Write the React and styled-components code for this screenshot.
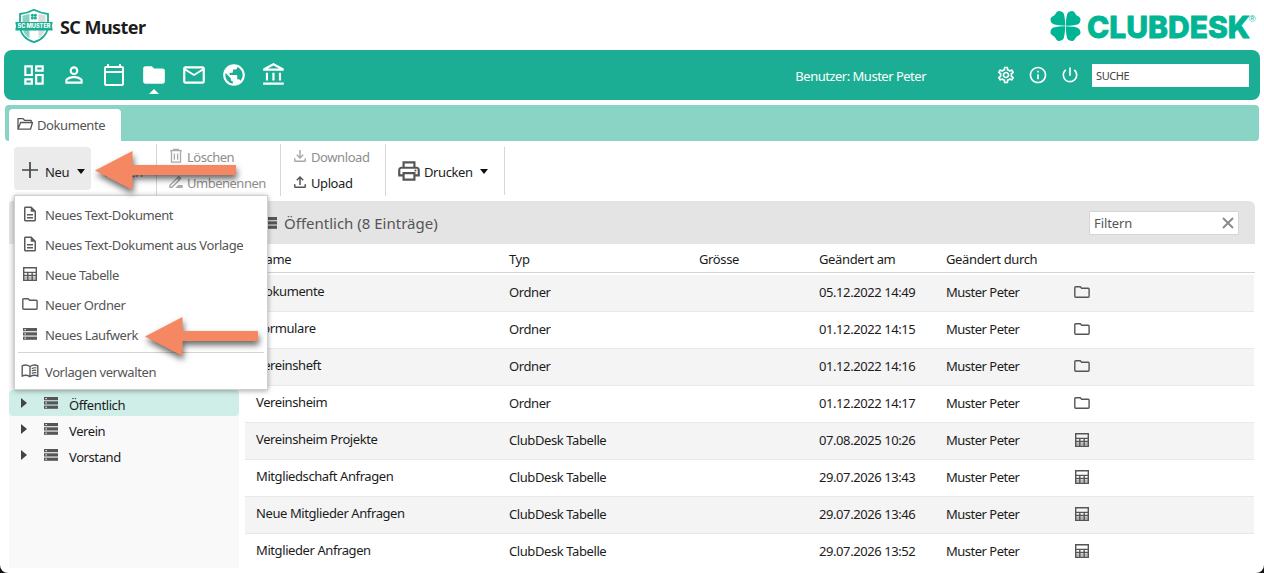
import React from "react";
import styled, { createGlobalStyle, css } from "styled-components";
import {
  MdOutlineDashboard, MdPersonOutline, MdOutlineCalendarToday, MdFolder, MdMailOutline, MdPublic,
  MdOutlineAccountBalance, MdOutlineSettings, MdInfoOutline, MdPowerSettingsNew, MdOutlineDescription,
  MdOutlinePrint, MdOutlineFileDownload, MdOutlineFileUpload, MdDriveFileRenameOutline,
} from "react-icons/md";

const Global = createGlobalStyle`
  *, *::before, *::after { box-sizing: border-box; }
  body { margin: 0; background: #15131a; overflow: hidden; }
`;

const Window = styled.div`
  position: relative;
  height: 573px;
  width: 1264px;
  overflow: hidden;
  display: flex;
  flex-direction: column;
  background: #fff;
  border-radius: 0 0 8px 8px;
  font-family: "Noto Sans", "Open Sans", sans-serif;
  font-size: 13px;
  letter-spacing: -0.41px;
  color: #1c1c1c;
  white-space: nowrap;
`;

const Header = styled.header`
  height: 50px;
  flex: none;
  display: flex;
  align-items: flex-start;
  padding: 8px 7px 0 15px;
`;
const ClubName = styled.h1`
  margin: 7px 0 0 7px;
  font: 700 18px/25px "Noto Sans", sans-serif;
  letter-spacing: -0.55px;
  flex: 1;
`;
const Brand = styled.div`
  display: flex;
  color: #00b594;
  padding-top: 2px;
`;
const BrandName = styled.span`
  width: 168px;
  font: 800 30px/34px Inter, sans-serif;
  letter-spacing: 0;
  -webkit-text-stroke: 0.8px currentColor;
  padding-left: 6px;
`;
const Registered = styled.span`
  width: 8px;
  font: 9px/10px "Liberation Sans", sans-serif;
  margin-top: 4px;
`;

const Nav = styled.nav`
  height: 50px;
  flex: none;
  margin: 0 4px;
  padding: 0 11px 0 17px;
  border-radius: 8px;
  background: #1bae94;
  color: #fff;
  display: flex;
  align-items: center;
`;
const NavItem = styled.span`
  position: relative;
  width: 40px;
  height: 26px;
  display: flex;
  align-items: center;
  svg { width: 26px; height: 26px; }
  ${(p) => p.$small && css`
    padding-left: 1px;
    svg { width: 24px; height: 24px; }
  `}
  ${(p) => p.$active && css`
    &::after {
      content: "";
      position: absolute;
      left: 8px;
      top: 27px;
      border: 5px solid transparent;
      border-top: 0;
      border-bottom-color: #fff;
    }
  `}
`;
const User = styled.span`
  margin: 0 70px 0 auto;
  padding-top: 2px;
  letter-spacing: -0.5px;
`;
const NavTool = styled.span`
  width: 32px;
  height: 20px;
  svg { width: 20px; height: 20px; }
`;
const Search = styled.div`
  width: 157px;
  height: 23px;
  padding: 0 4px;
  background: #fff;
  color: #444;
  font-size: 11px;
  line-height: 24px;
`;

const TabStrip = styled.div`
  height: 36px;
  flex: none;
  margin: 5px 5px 0;
  padding: 4px 4px 0;
  border-radius: 4px;
  background: #89d4c4;
`;
const Tab = styled.div`
  width: 112px;
  height: 32px;
  padding: 0 7px;
  display: flex;
  align-items: center;
  gap: 3px;
  border-radius: 4px 4px 0 0;
  background: #fff;
  color: #555;
  svg { margin-top: -3px; }
`;

const Toolbar = styled.div`
  height: 60px;
  flex: none;
  padding-left: 14px;
  display: flex;
  align-items: flex-start;
`;
const Group = styled.div`
  width: ${(p) => p.$w}px;
  height: ${(p) => p.$h || 52}px;
  margin-top: ${(p) => (p.$h ? 6 : 3)}px;
  padding-left: ${(p) => p.$pad}px;
  border-right: 1px solid #d6d6d6;
  display: flex;
  flex-direction: ${(p) => (p.$row ? "row" : "column")};
  align-items: ${(p) => (p.$row ? "center" : "stretch")};
`;
const NewButton = styled.div`
  width: 77px;
  height: 43px;
  margin: 0 12px 3px 0;
  padding: 6px 6px 0 8px;
  display: flex;
  align-items: center;
  border-radius: 4px;
  background: #ebebeb;
`;
const Label = styled.span`
  margin: 0 auto 0 ${(p) => p.$left || 0}px;
  padding-top: ${(p) => p.$top || 0}px;
`;
const Caret = styled.i`
  border: 4.5px solid transparent;
  border-top: 5px solid #111;
  border-bottom: 0;
`;
const Action = styled.div`
  height: 26px;
  display: flex;
  align-items: center;
  gap: 2px;
  color: ${(p) => (p.$off ? "#8d8d8d" : "#1c1c1c")};
  svg { color: ${(p) => (p.$off ? "#aaa" : "#555")}; margin: -2px 0 0 -1px; }
`;
const OpenAction = styled(Action)`
  width: 40px;
  height: 32px;
  padding-top: 4px;
  justify-content: flex-end;
`;
const EditAction = styled(Action)`
  letter-spacing: -0.5px;
  svg { width: 18px; margin-right: 0; }
`;

const Body = styled.div`
  height: 367px;
  flex: none;
  overflow: hidden;
  padding-left: 9px;
  display: flex;
  gap: 6px;
`;
const Sidebar = styled.aside`
  width: 230px;
  background: #f9f9f9;
  border-radius: 4px 4px 0 0;
`;
const SideHead = styled.div`
  height: 43px;
  margin-bottom: 146px;
  border-radius: 4px 4px 0 0;
  background: #e4e4e4;
`;
const Node = styled.div`
  height: 26px;
  padding: 0 12px;
  display: flex;
  align-items: flex-start;
  border-radius: 4px;
  background: ${(p) => (p.$on ? "#cfeee8" : "transparent")};
  svg { margin: 7px 11px 0 17px; color: #555; }
  span { line-height: 30px; }
`;
const Expander = styled.i`
  margin-top: 8px;
  border: 5px solid transparent;
  border-left: 6px solid #444;
  border-right: 0;
`;

const Main = styled.main`
  width: 1010px;
`;
const MainHead = styled.div`
  height: 43px;
  padding: 0 16px 0 18px;
  border-radius: 4px 6px 0 0;
  background: #e4e4e4;
  display: flex;
  align-items: center;
  color: #555;
`;
const Title = styled.span`
  font-size: 15px;
  letter-spacing: 0;
  line-height: 20px;
  margin: 1px auto 0 7px;
`;
const Filter = styled.div`
  width: 150px;
  height: 24px;
  padding: 0 4px;
  display: flex;
  align-items: center;
  justify-content: space-between;
  border: 1px solid #d5d5d5;
  background: #fff;
  letter-spacing: -0.1px;
`;
const Row = styled.div`
  height: 37px;
  width: 1009px;
  padding: 0 0 3px 11px;
  display: grid;
  grid-template-columns: 253px 190px 120px 127px 128px 1fr;
  align-items: center;
  border-bottom: 1px solid #e8e8e8;
  background: ${(p) => (p.$alt ? "#f4f4f4" : "#fff")};
  svg { display: block; color: #555; }
`;
const HeadRow = styled(Row)`
  height: 29px;
  width: 1010px;
  margin-bottom: 2px;
  padding-top: 2px;
  padding-bottom: 0;
  border-color: #d4d4d4;
  letter-spacing: -0.36px;
`;
const Name = styled.span`
  margin-top: -1px;
`;
const Stamp = styled.span`
  letter-spacing: -0.42px;
`;
const Person = styled.span`
  letter-spacing: -0.5px;
`;

const Menu = styled.div`
  position: absolute;
  left: 14px;
  top: 195px;
  width: 254px;
  height: 195px;
  padding: 4px 2px;
  border: 1px solid #d0d0d0;
  background: #fff;
  box-shadow: 0 1px 5px rgba(0, 0, 0, 0.35);
  color: #555;
`;
const MenuItem = styled.div`
  height: 30px;
  padding-left: 4px;
  display: grid;
  grid-template-columns: 18px 1fr;
  justify-items: start;
  align-items: center;
  column-gap: 6px;
  svg { justify-self: center; margin-top: -2px; color: #5a5a5a; }
`;
const Separator = styled.div`
  height: 1px;
  margin: 2px 1px 4px;
  background: #d4d4d4;
`;
const Pointer = styled.svg`
  position: absolute;
  left: ${(p) => p.$x}px;
  top: ${(p) => p.$y}px;
  overflow: visible;
  fill: #f58762;
  filter: drop-shadow(1px 4px 3px rgba(0, 0, 0, 0.6));
`;

const TableIcon = () => (
  <svg width="16" height="16" viewBox="0 0 16 16" fill="none" stroke="currentColor" strokeWidth="1.4">
    <path d="M1.7 1.7h12.6v12.6H1.7zM1.7 6.4h12.6M1.7 9.500h12.6M5.8 6v8M10.2 6v8" />
    <path d="M1.700 12h12.600" strokeWidth="0.8" />
  </svg>
);
const FolderIcon = () => (
  <svg width="16" height="16" viewBox="0 0 16 16" fill="none" stroke="currentColor" strokeWidth="1.4">
    <path d="M1.700 2.700h4.500l1.500 1.500h6.600q.8 0 .8.8v7.300q0 .9-.9.9H1.700q-.9 0-.9-.9V3.600q0-.9.9-.9z" />
  </svg>
);
const DriveIcon = () => (
  <svg width="14" height="12" viewBox="0 0 14 12">
    {[0, 4.3, 8.6].map((y) => (
      <g key={y}>
        <rect y={y} width="14" height="3.200" fill="currentColor" />
        <rect x="1.500" y={y + 1} width="1.300" height="1.200" fill="#fff" />
      </g>
    ))}
  </svg>
);
const BookIcon = () => (
  <svg width="18" height="14" viewBox="0 0 18 14" fill="none" stroke="currentColor" strokeWidth="1.400">
    <path d="M9 2.500Q5-.2 1.200 1.800V12q3.800-1.700 7.800.6 4-2.300 7.800-.6V1.800Q13-.2 9 2.500zV12.500" />
    <path d="M10.800 4.600q2.200-1.200 4.500-.7M10.800 7q2.200-1.200 4.500-.7M10.800 9.400q2.200-1.200 4.500-.7" strokeWidth="1.200" />
  </svg>
);
const OpenFolderIcon = () => (
  <svg width="18" height="16" viewBox="0 0 18 16" fill="none" stroke="currentColor" strokeWidth="1.3" strokeLinejoin="round">
    <path d="M2 13V2.6h5l1.5 1.7h6.700v2.200M2 13.200h12.500l2-6.700H4.600z" />
  </svg>
);
const TrashIcon = () => (
  <svg width="18" height="16" viewBox="-1 0 18 16" fill="none" stroke="currentColor" strokeWidth="1.3">
    <path d="M2 2.700h12M5.500 2.400V1.300h5v1.100M3.500 3v11.200h9V3M6.400 5.500v6.200M9.600 5.500v6.200" />
  </svg>
);
const PlusGlyph = styled.svg`
  margin-top: -4px;
`;
const PlusIcon = () => (
  <PlusGlyph width="16" height="16" viewBox="0 0 16 16" stroke="#444" strokeWidth="1.700">
    <path d="M8 0v16M0 8h16" />
  </PlusGlyph>
);
const Clover = () => (
  <svg width="31" height="32" viewBox="0 0 31 32" fill="currentColor">
    {[0, 90, 180, 270].map((a) => (
      <path key={a} transform={`rotate(${a} 15.500 16)`} d="M15.200 15.700C11 15.600 6.500 15.200 3.500 14.300C1.300 13.400.5 11.300.5 9.300C.6 7 3.300 6.400 4.600 5.100C5.900 3.800 6.600 1.100 8.900 1C11 1 13 1.800 13.900 4C14.800 7 15.100 11.500 15.200 15.700z" />
    ))}
  </svg>
);
const Crest = () => (
  <svg width="38" height="36" viewBox="0 0 38 36">
    <path d="M5 6Q13 5 19 1.800Q25 5 33 6V17C33 26 27 32 19 34.200C11 32 5 26 5 17Z" fill="#fff" stroke="#1bae94" strokeWidth="1.800" />
    <path d="M7.500 7.800Q11 7 14.500 5.800V30.200C9.500 27.500 7.500 23 7.500 17Z" fill="#8bd0c2" />
    <path d="M23.500 5.800Q27 7 30.500 7.800V17C30.500 23 28.500 27.500 23.500 30.200Z" fill="#dcdcdc" />
    <g fill="#1bae94">
      <circle cx="17.400" cy="7.200" r="1.500" /><circle cx="20.400" cy="7.200" r="1.500" />
      <circle cx="17.400" cy="10" r="1.500" /><circle cx="20.400" cy="10" r="1.500" />
      <path d="M.3 14h37.400l-.7 4 .7 4.500H.3L1 18z" />
    </g>
    <text x="19" y="20.400" textAnchor="middle" textLength="33" lengthAdjust="spacingAndGlyphs" fill="#fff" fontFamily="Inter" fontWeight="800" fontSize="6" letterSpacing="0">SC MUSTER</text>
  </svg>
);
const Arrow = ({ x, y, length }) => (
  <Pointer $x={x} $y={y} width={length} height="39">
    <path d={`M0 19.500L37.500 0V14H${length}V24H37.500V39z`} />
  </Pointer>
);

const NAV = [MdOutlineDashboard, MdPersonOutline, MdOutlineCalendarToday, MdFolder, MdMailOutline, MdPublic, MdOutlineAccountBalance];
const MENU = [
  [<MdOutlineDescription size={18} />, "Neues Text-Dokument"],
  [<MdOutlineDescription size={18} />, "Neues Text-Dokument aus Vorlage"],
  [<TableIcon />, "Neue Tabelle"],
  [<FolderIcon />, "Neuer Ordner"],
  [<DriveIcon />, "Neues Laufwerk"],
];
const ROWS = [
  ["Dokumente", "Ordner", "05.12.2022 14:49"],
  ["Formulare", "Ordner", "01.12.2022 14:15"],
  ["Vereinsheft", "Ordner", "01.12.2022 14:16"],
  ["Vereinsheim", "Ordner", "01.12.2022 14:17"],
  ["Vereinsheim Projekte", "ClubDesk Tabelle", "07.08.2025 10:26"],
  ["Mitgliedschaft Anfragen", "ClubDesk Tabelle", "29.07.2026 13:43"],
  ["Neue Mitglieder Anfragen", "ClubDesk Tabelle", "29.07.2026 13:46"],
  ["Mitglieder Anfragen", "ClubDesk Tabelle", "29.07.2026 13:52"],
];

export default function App() {
  return (
    <Window>
      <Global />
      <Header>
        <Crest />
        <ClubName>SC Muster</ClubName>
        <Brand><Clover /><BrandName>CLUBDESK</BrandName><Registered>®</Registered></Brand>
      </Header>
      <Nav>
        {NAV.map((Icon, i) => <NavItem key={i} $active={i === 3} $small={i === 2}><Icon /></NavItem>)}
        <User>Benutzer: Muster Peter</User>
        <NavTool><MdOutlineSettings /></NavTool>
        <NavTool><MdInfoOutline /></NavTool>
        <NavTool><MdPowerSettingsNew /></NavTool>
        <Search>SUCHE</Search>
      </Nav>
      <TabStrip><Tab><OpenFolderIcon />Dokumente</Tab></TabStrip>
      <Toolbar>
        <Group $row $w={143} $pad={0}>
          <NewButton><PlusIcon /><Label $left={7}>Neu</Label><Caret /></NewButton>
          <OpenAction $off>Öffnen</OpenAction>
        </Group>
        <Group $w={124} $pad={11}>
          <EditAction $off><TrashIcon />Löschen</EditAction>
          <EditAction $off><MdDriveFileRenameOutline size={18} />Umbenennen</EditAction>
        </Group>
        <Group $w={105} $pad={11}>
          <Action $off><MdOutlineFileDownload size={18} />Download</Action>
          <Action><MdOutlineFileUpload size={18} />Upload</Action>
        </Group>
        <Group $row $w={119} $h={48} $pad={10}>
          <MdOutlinePrint size={26} color="#555" />
          <Label $left={2} $top={2}>Drucken</Label>
          <Caret style={{ marginRight: 16 }} />
        </Group>
      </Toolbar>
      <Body>
        <Sidebar>
          <SideHead />
          {["Öffentlich", "Verein", "Vorstand"].map((n, i) => (
            <Node key={n} $on={i === 0}><Expander /><DriveIcon /><span>{n}</span></Node>
          ))}
        </Sidebar>
        <Main>
          <MainHead>
            <DriveIcon />
            <Title>Öffentlich (8 Einträge)</Title>
            <Filter>
              Filtern
              <svg width="12" height="12" viewBox="0 0 12 12" stroke="#888" strokeWidth="1.800"><path d="M1 1l10 10M11 1L1 11" /></svg>
            </Filter>
          </MainHead>
          <HeadRow>
            <span>Name</span><span>Typ</span><span>Grösse</span><span>Geändert am</span><span>Geändert durch</span>
          </HeadRow>
          {ROWS.map(([name, type, date], i) => (
            <Row key={name} $alt={i % 2 === 0}>
              <Name>{name}</Name><span>{type}</span><span /><Stamp>{date}</Stamp><Person>Muster Peter</Person>
              {type === "Ordner" ? <FolderIcon /> : <TableIcon />}
            </Row>
          ))}
        </Main>
      </Body>
      <Menu>
        {MENU.map(([icon, text]) => <MenuItem key={text}>{icon}{text}</MenuItem>)}
        <Separator />
        <MenuItem><BookIcon />Vorlagen verwalten</MenuItem>
      </Menu>
      <Arrow x={95} y={151} length={141} />
      <Arrow x={145} y={317} length={113} />
    </Window>
  );
}
